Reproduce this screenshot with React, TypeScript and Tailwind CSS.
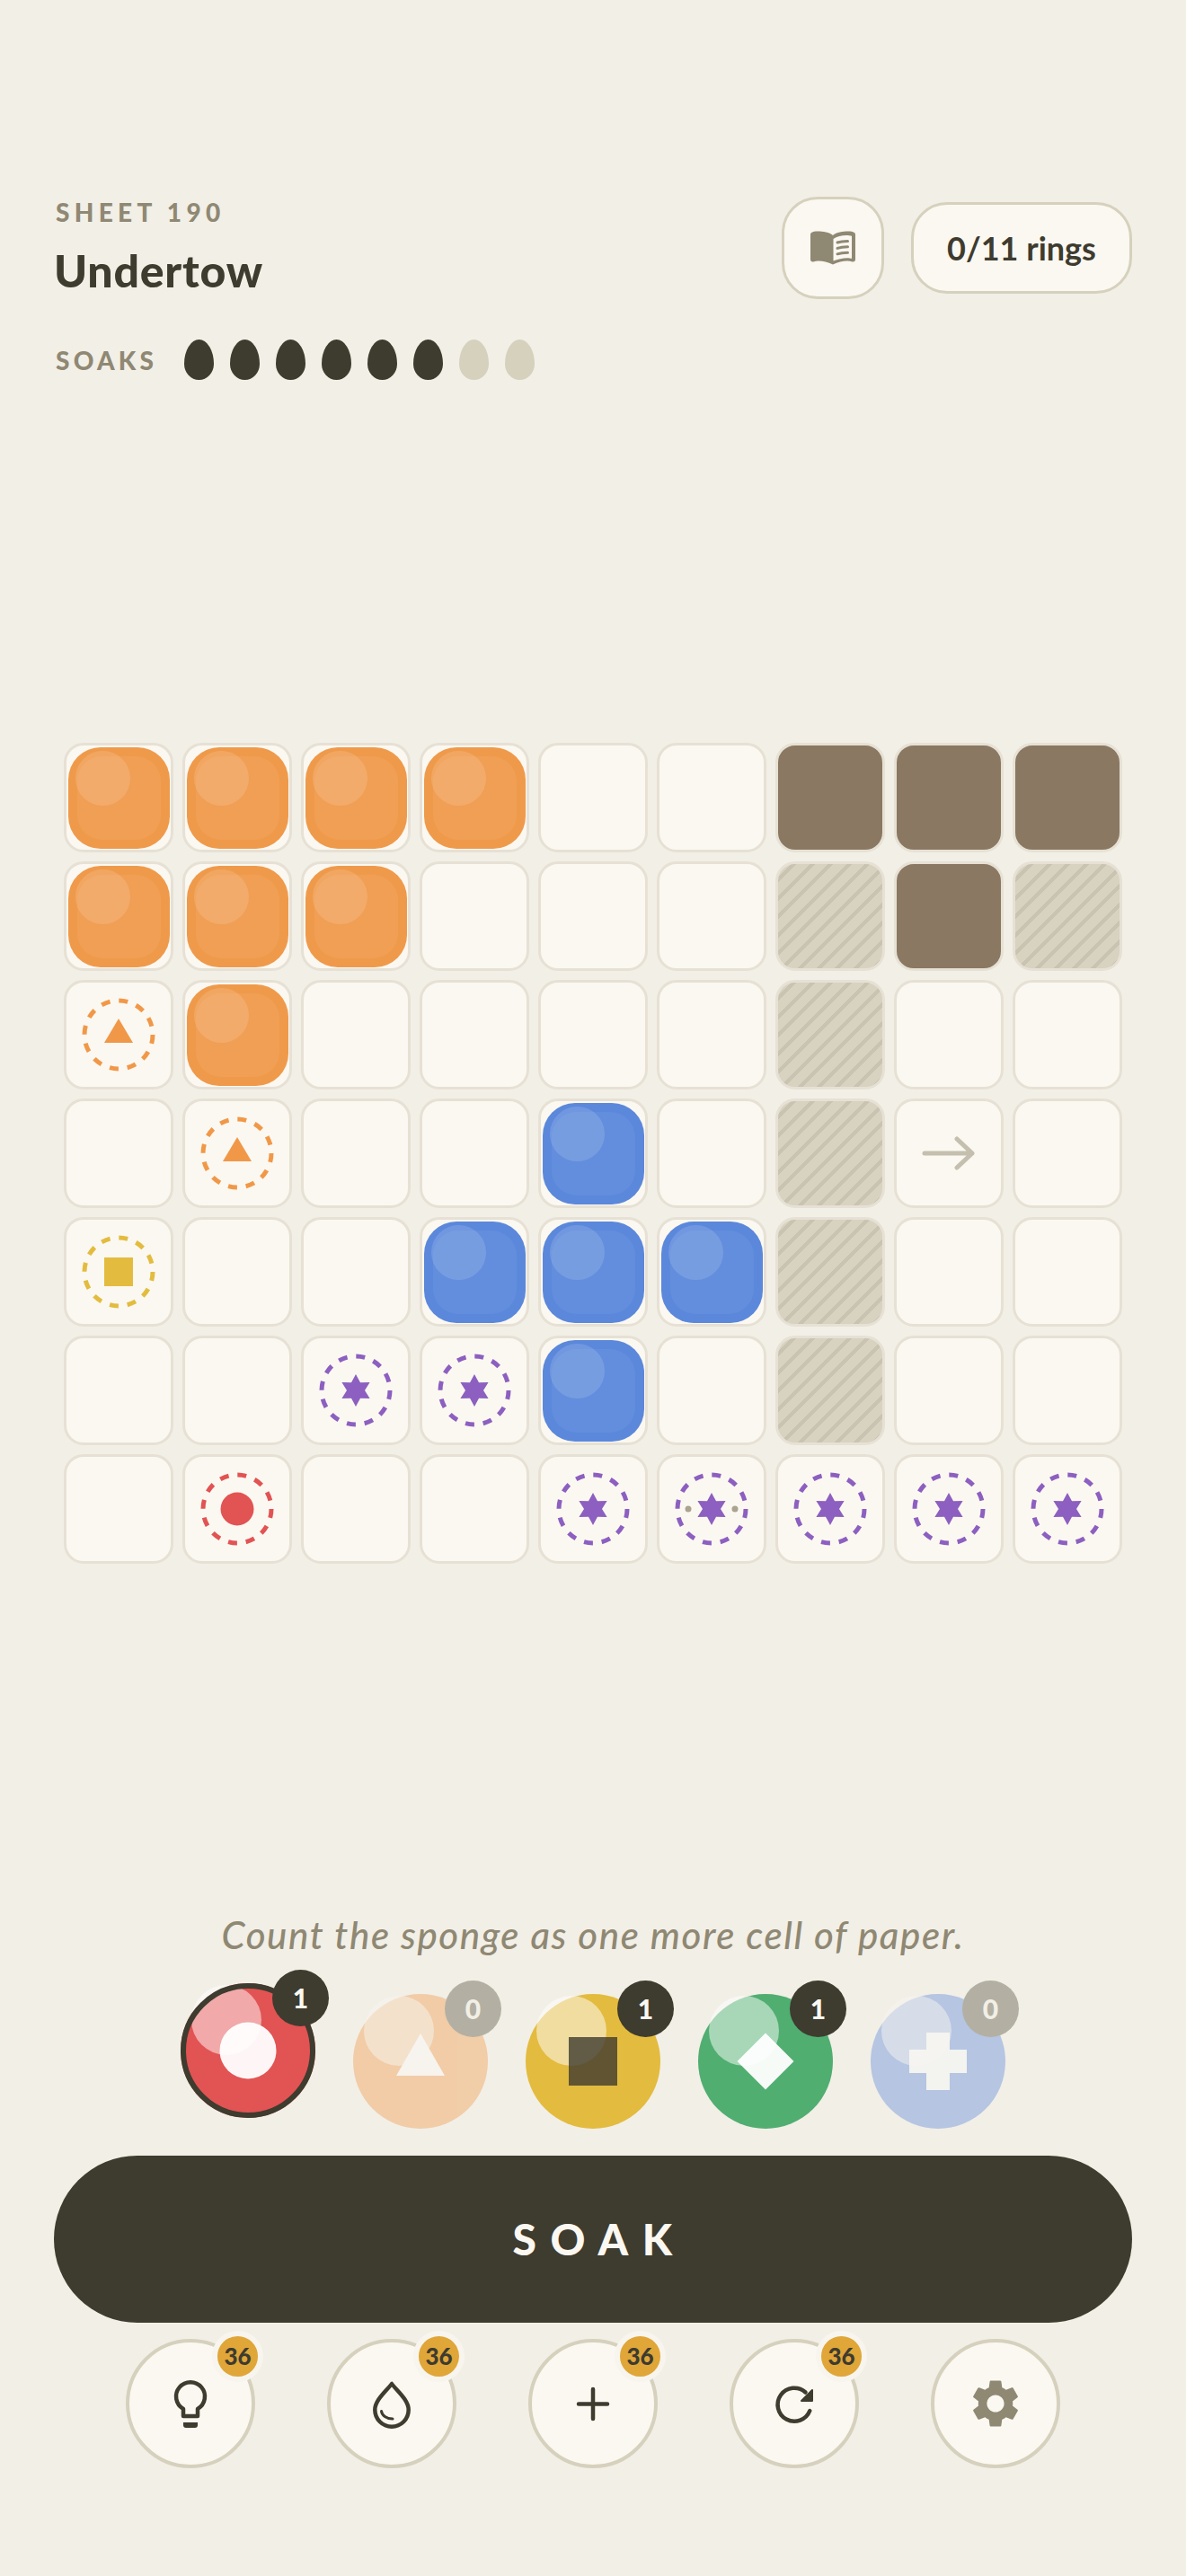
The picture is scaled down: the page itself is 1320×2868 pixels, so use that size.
import { MdSettings } from 'react-icons/md';

const INK = '#3e3b2f';

const BOARD = [
  ['o', 'o', 'o', 'o', '', '', 'W', 'W', 'W'],
  ['o', 'o', 'o', '', '', '', 'H', 'W', 'H'],
  ['rt', 'o', '', '', '', '', 'H', '', ''],
  ['', 'rt', '', '', 'b', '', 'H', 'A', ''],
  ['ry', '', '', 'b', 'b', 'b', 'H', '', ''],
  ['', '', 'rp', 'rp', 'b', '', 'H', '', ''],
  ['', 'rc', '', '', 'rp', 'rd', 'rp', 'rp', 'rp'],
];

function starPoints(outer: number, inner: number) {
  const pts: string[] = [];
  for (let i = 0; i < 12; i++) {
    const r = i % 2 === 0 ? outer : inner;
    const a = (Math.PI / 6) * i - Math.PI / 2;
    pts.push(`${(r * Math.cos(a)).toFixed(2)},${(r * Math.sin(a)).toFixed(2)}`);
  }
  return pts.join(' ');
}

function Ring({ kind }: { kind: string }) {
  const color =
    kind === 'rt' ? '#f19848' : kind === 'ry' ? '#e3bc3f' : kind === 'rc' ? '#e25353' : '#8c5fc0';
  return (
    <svg viewBox="-41 -41 82 82" className="h-[82px] w-[82px]">
      <circle cx="0" cy="0" r="38" fill="none" stroke={color} strokeWidth="5" strokeDasharray="10 9.9" />
      {kind === 'rt' && <polygon points="0,-18 16,9 -16,9" fill={color} />}
      {kind === 'ry' && <rect x="-16" y="-16" width="32" height="32" fill={color} />}
      {kind === 'rc' && <circle cx="0" cy="0" r="18.5" fill={color} />}
      {(kind === 'rp' || kind === 'rd') && <polygon points={starPoints(18, 10)} fill={color} />}
      {kind === 'rd' && (
        <>
          <circle cx="-26" cy="0" r="3.5" fill="#a9a38f" />
          <circle cx="26" cy="0" r="3.5" fill="#a9a38f" />
        </>
      )}
    </svg>
  );
}

function Blob({ color }: { color: string }) {
  return (
    <div className={`relative h-[113px] w-[113px] rounded-[36px] ${color}`}>
      <div className="absolute inset-[10px] rounded-[28px] bg-white/5" />
      <div className="absolute left-[8px] top-[4px] h-[61px] w-[61px] rounded-full bg-white/[0.13]" />
    </div>
  );
}

function Cell({ kind }: { kind: string }) {
  if (kind === 'W') {
    return <div className="h-[122px] w-[122px] rounded-[22px] border-[3px] border-[#e6e1d4] bg-[#8a7862]" />;
  }
  if (kind === 'H') {
    return (
      <div className="h-[122px] w-[122px] rounded-[22px] border-[3px] border-[#e6e1d4] bg-[repeating-linear-gradient(135deg,#d8d2c0_0px,#d8d2c0_10.5px,#c9c3b1_10.5px,#c9c3b1_14.5px)]" />
    );
  }
  return (
    <div className="flex h-[122px] w-[122px] items-center justify-center rounded-[22px] border-[3px] border-[#e6e1d4] bg-[#fbf8f1]">
      {kind === 'o' && <Blob color="bg-[#ef9a4b]" />}
      {kind === 'b' && <Blob color="bg-[#5b88db]" />}
      {kind.startsWith('r') && <Ring kind={kind} />}
      {kind === 'A' && (
        <svg viewBox="0 0 60 40" className="h-[40px] w-[60px]" fill="none" stroke="#c4bfae" strokeWidth="5" strokeLinecap="round" strokeLinejoin="round">
          <path d="M3 20H56M39 4L56 20L39 36" />
        </svg>
      )}
    </div>
  );
}

function Disc({ fill, glyph, count, selected }: { fill: string; glyph: string; count: number; selected?: boolean }) {
  const dim = count === 0;
  return (
    <div className={`relative h-[150px] w-[150px] ${selected ? '-translate-y-3' : ''}`}>
      <div className={`absolute inset-0 ${dim ? 'opacity-40' : ''}`}>
        <div className={`absolute inset-0 rounded-full ${fill}`} />
        <div className="absolute left-[12px] top-[2px] h-[78px] w-[78px] rounded-full bg-white/50" />
        <svg viewBox="-75 -75 150 150" className="absolute inset-0 h-[150px] w-[150px]">
          {glyph === 'circle' && <circle cx="0" cy="0" r="31.5" fill="#fff" fillOpacity="0.95" />}
          {glyph === 'tri' && <polygon points="0,-31 27,16 -27,16" fill="#fff" fillOpacity="0.95" />}
          {glyph === 'square' && <rect x="-27" y="-27" width="54" height="54" fill={INK} fillOpacity="0.8" />}
          {glyph === 'diamond' && <polygon points="0,-31.5 31.5,0 0,31.5 -31.5,0" fill="#fff" fillOpacity="0.95" />}
          {glyph === 'plus' && (
            <path d="M-13-32H13V-13H32V13H13V32H-13V13H-32V-13H-13Z" fill="#fff" fillOpacity="0.95" />
          )}
        </svg>
        {selected && <div className="absolute inset-0 rounded-full border-[6px] border-[#3e3b2f]" />}
      </div>
      <div
        className={`absolute -right-[15px] -top-[15px] flex h-[63px] w-[63px] items-center justify-center rounded-full text-[30px] font-black ${
          dim ? 'bg-[#b3b0a3] text-[#f2efe6]' : 'bg-[#3e3b2f] text-[#fbf8f1]'
        }`}
      >
        {count}
      </div>
    </div>
  );
}

function ToolButton({ children, coins }: { children: React.ReactNode; coins?: number }) {
  return (
    <div className="relative flex h-[144px] w-[144px] items-center justify-center rounded-full border-[4px] border-[#d6d1bd] bg-[#fbf8f1]">
      {children}
      {coins !== undefined && (
        <div className="absolute -right-[13px] -top-[13px] flex h-[57px] w-[57px] items-center justify-center rounded-full border-[6px] border-[#f7f5ee] bg-[#e0a638] text-[26px] font-black text-[#3e3b2f]">
          {coins}
        </div>
      )}
    </div>
  );
}

export default function App() {
  return (
    <div className="flex h-[2868px] w-[1320px] flex-col overflow-hidden bg-[#f2efe7] px-[60px] pt-[219px] font-['Lato',sans-serif] text-[#3e3b2f]">
      <header className="flex items-start justify-between">
        <div>
          <div className="pl-[2px] text-[28px] font-black leading-[34px] tracking-[0.19em] text-[#8f8873]">SHEET 190</div>
          <h1 className="mt-[20px] text-[50px] font-black leading-[56px] tracking-[0.8px]">Undertow</h1>
          <div className="mt-[49px] flex items-center">
            <span className="w-[145px] pl-[2px] text-[28px] font-black tracking-[0.15em] text-[#8f8873]">SOAKS</span>
            <div className="flex gap-[18px]">
              {[1, 2, 3, 4, 5, 6, 7, 8].map((n) => (
                <span
                  key={n}
                  className={`h-[45px] w-[33px] rounded-[50%/60%_60%_40%_40%] ${n <= 6 ? 'bg-[#3e3b2f]' : 'bg-[#d6d1bd]'}`}
                />
              ))}
            </div>
          </div>
        </div>
        <div className="flex items-center gap-[30px]">
          <button className="flex h-[114px] w-[114px] items-center justify-center rounded-[40px] border-[3px] border-[#d6d1bd] bg-[#fbf8f1]">
            <svg viewBox="0 0 50 38" className="h-[38px] w-[50px]">
              <path
                fillRule="evenodd"
                fill="#8f8873"
                d="M25 5C21 1.5 14 .5 8 .5 5 .5 3 1 1.5 1.8 .5 2.3 0 3.3 0 4.5V32C0 33.8 1.5 34.8 3.2 34.4 5 34 7 33.6 9 33.6 14 33.6 19.5 35 25 37.5 30.5 35 36 33.6 41 33.6 43 33.6 45 34 46.8 34.4 48.5 34.8 50 33.8 50 32V4.5C50 3.3 49.5 2.3 48.5 1.8 47 1 45 .5 42 .5 36 .5 29 1.5 25 5ZM25.5 9C29 6.4 35 5 40 5 42 5 44.5 5.3 46 5.8V30.8C44.5 30.5 43 30.2 41 30.2 36 30.2 30 31.5 25.5 33.5Z"
              />
              <path d="M30 13C33 11.9 37 11.4 41.5 11.4M30 19.4C33 18.3 37 17.8 41.5 17.8M30 25.8C33 24.7 37 24.2 41.5 24.2" fill="none" stroke="#8f8873" strokeWidth="3" strokeLinecap="round" />
            </svg>
          </button>
          <div className="flex h-[102px] w-[246px] items-center justify-center rounded-[40px] border-[3px] border-[#d6d1bd] bg-[#fbf8f1] text-[36px] font-bold">
            0/11 rings
          </div>
        </div>
      </header>

      <section className="mx-[11px] mt-[404px] grid grid-cols-[repeat(9,122px)] gap-[10px]">
        {BOARD.flat().map((kind, i) => (
          <Cell key={i} kind={kind} />
        ))}
      </section>

      <p className="mt-[390px] text-center text-[42px] font-medium italic leading-[46px] tracking-[1.6px] text-[#8f8873]">
        Count the sponge as one more cell of paper.
      </p>

      <div className="mt-[43px] flex justify-center gap-[42px]">
        <Disc fill="bg-[#e25353]" glyph="circle" count={1} selected />
        <Disc fill="bg-[#f09a4a]" glyph="tri" count={0} />
        <Disc fill="bg-[#e3bb3e]" glyph="square" count={1} />
        <Disc fill="bg-[#50ae70]" glyph="diamond" count={1} />
        <Disc fill="bg-[#5b88db]" glyph="plus" count={0} />
      </div>

      <button className="mt-[30px] flex h-[186px] w-full items-center justify-center rounded-full bg-[#3e3b2f] pl-[14px] text-[48px] font-black tracking-[0.32em] text-[#fbf8f1]">
        SOAK
      </button>

      <div className="mt-[18px] flex justify-center gap-[80px]">
        <ToolButton coins={36}>
          <svg viewBox="0 0 60 60" className="h-[60px] w-[60px]" fill="none" stroke={INK} strokeWidth="4.5" strokeLinejoin="round">
            <path d="M22 36A16 16 0 1 1 38 36V44H22Z" />
            <path d="M22 51H38V54A3 3 0 0 1 35 57H25A3 3 0 0 1 22 54Z" fill={INK} stroke="none" />
          </svg>
        </ToolButton>
        <ToolButton coins={36}>
          <svg viewBox="0 0 60 60" className="h-[60px] w-[60px]" fill="none" stroke={INK} strokeWidth="4.5" strokeLinecap="round" strokeLinejoin="round">
            <path d="M30 8C24 16 11.3 26 11.3 37A18.7 18.7 0 0 0 48.7 37C48.7 26 36 16 30 8Z" />
            <path d="M18.5 38.5C19 43 24 47 31 47" strokeWidth="3" />
          </svg>
        </ToolButton>
        <ToolButton coins={36}>
          <svg viewBox="0 0 60 60" className="h-[60px] w-[60px]" fill="none" stroke={INK} strokeWidth="4.5" strokeLinecap="round">
            <path d="M30 14V47M14 30.5H46" />
          </svg>
        </ToolButton>
        <ToolButton coins={36}>
          <svg viewBox="0 0 60 60" className="h-[60px] w-[60px]" fill="none" stroke={INK} strokeWidth="4.5" strokeLinecap="round">
            <path d="M47.3 38A18.5 18.5 0 1 1 42.5 17.5" />
            <path d="M50 15V27H38Z" fill={INK} strokeWidth="2" strokeLinejoin="round" />
          </svg>
        </ToolButton>
        <ToolButton>
          <MdSettings className="h-[64px] w-[64px] text-[#8f8873]" />
        </ToolButton>
      </div>
    </div>
  );
}
